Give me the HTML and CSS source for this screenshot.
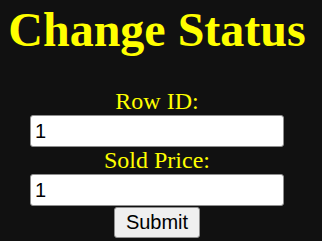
FILE: index.html
```html
<!DOCTYPE html>
<html>
<head>
<meta charset="utf-8">
<link rel="stylesheet" href="styles.css">
</head>
<body>
<main class="page">
  <h1 class="title">Change Status</h1>
  <form class="form">
    <label class="label" for="row">Row ID:</label>
    <input class="field" id="row" type="text" value="1">
    <label class="label" for="price">Sold Price:</label>
    <input class="field" id="price" type="text" value="1">
    <button class="submit" type="button">Submit</button>
  </form>
</main>
</body>
</html>
```
FILE: styles.css
```css
html, body {
  margin: 0;
  padding: 0;
  background: #111111;
}
.page {
  padding: 0 16px 0 8px;
  display: flex;
  flex-direction: column;
  align-items: center;
  font-family: "Liberation Serif", "Times New Roman", serif;
  color: #ffff00;
}
.title {
  margin: 2px 0 31px;
  font-size: 48px;
  font-weight: bold;
  line-height: normal;
  white-space: nowrap;
}
.form {
  display: flex;
  flex-direction: column;
  align-items: center;
}
.label {
  font-size: 24px;
  line-height: normal;
}
.field {
  box-sizing: border-box;
  width: 254px;
  height: 32px;
  margin: 0;
  padding: 1px 4px;
  border: 1px solid #8f8f8f;
  border-radius: 3px;
  background: #ffffff;
  color: #000000;
  font-family: "Liberation Sans", Arial, sans-serif;
  font-size: 20px;
}
.submit {
  box-sizing: border-box;
  margin: 1px 0 0;
  width: 86px;
  height: 31px;
  padding: 0 6px;
  border: 1px solid #8f8f8f;
  border-radius: 3px;
  background: #efefef;
  color: #000000;
  font-family: "Liberation Sans", Arial, sans-serif;
  font-size: 20px;
}
```
